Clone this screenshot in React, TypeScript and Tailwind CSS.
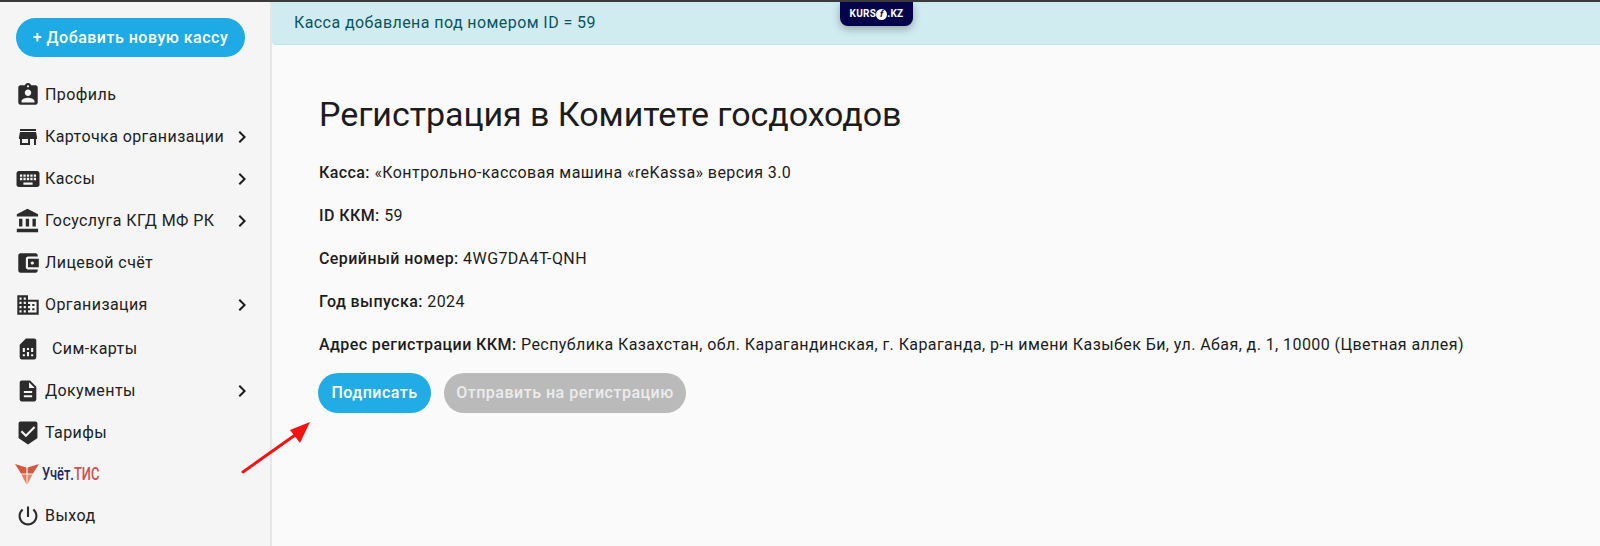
const paths = {
  profile: "M19 3h-4.18C14.4 1.84 13.3 1 12 1c-1.3 0-2.4.84-2.82 2H5c-1.1 0-2 .9-2 2v14c0 1.1.9 2 2 2h14c1.1 0 2-.9 2-2V5c0-1.1-.9-2-2-2zm-7 0c.55 0 1 .45 1 1s-.45 1-1 1-1-.45-1-1 .45-1 1-1zm0 4c1.66 0 3 1.34 3 3s-1.34 3-3 3-3-1.34-3-3 1.34-3 3-3zm6 12H6v-1.4c0-2 4-3.1 6-3.1s6 1.1 6 3.1V19z",
  store: "M20 4H4v2h16V4zm1 10v-2l-1-5H4l-1 5v2h1v6h10v-6h4v6h2v-6h1zm-9 4H6v-4h6v4z",
  keyboard: "M20 5H4c-1.1 0-1.99.9-1.99 2L2 17c0 1.1.9 2 2 2h16c1.1 0 2-.9 2-2V7c0-1.1-.9-2-2-2zm-9 3h2v2h-2V8zm0 3h2v2h-2v-2zM8 8h2v2H8V8zm0 3h2v2H8v-2zm-1 2H5v-2h2v2zm0-3H5V8h2v2zm9 7H8v-2h8v2zm0-4h-2v-2h2v2zm0-3h-2V8h2v2zm3 3h-2v-2h2v2zm0-3h-2V8h2v2z",
  bank: "M4 10v7h3v-7H4zm6 0v7h3v-7h-3zM2 22h19v-3H2v3zm14-12v7h3v-7h-3zm-4.5-9L2 6v2h19V6l-9.5-5z",
  wallet: "M21 18v1c0 1.1-.9 2-2 2H5c-1.11 0-2-.9-2-2V5c0-1.1.89-2 2-2h14c1.1 0 2 .9 2 2v1h-9c-1.11 0-2 .9-2 2v8c0 1.1.89 2 2 2h9zm-9-2h10V8H12v8zm4-2.5c-.83 0-1.5-.67-1.5-1.5s.67-1.5 1.5-1.5 1.5.67 1.5 1.5-.67 1.5-1.5 1.5z",
  domain: "M12 7V3H2v18h20V7H12zM6 19H4v-2h2v2zm0-4H4v-2h2v2zm0-4H4V9h2v2zm0-4H4V5h2v2zm4 12H8v-2h2v2zm0-4H8v-2h2v2zm0-4H8V9h2v2zm0-4H8V5h2v2zm10 12h-8v-2h2v-2h-2v-2h2v-2h-2V9h8v10zm-2-8h-2v2h2v-2zm0 4h-2v2h2v-2z",
  sim: "M19.99 4c0-1.1-.89-2-1.99-2h-8L4 8v12c0 1.1.9 2 2 2h12c1.1 0 2-.9 2-2l-.01-16zM9 19H7v-2h2v2zm8 0h-2v-2h2v2zm-8-4H7v-4h2v4zm4 4h-2v-4h2v4zm0-6h-2v-2h2v2zm4 2h-2v-4h2v4z",
  doc: "M14 2H6c-1.1 0-1.99.9-1.99 2L4 20c0 1.1.89 2 1.99 2H18c1.1 0 2-.9 2-2V8l-6-6zm2 16H8v-2h8v2zm0-4H8v-2h8v2zm-3-5V3.5L18.5 9H13z",
  tariff: "M19 1H5c-1.1 0-1.99.9-1.99 2L3 15.93c0 .69.35 1.3.88 1.66L12 23l8.11-5.41c.53-.36.88-.97.88-1.66L21 3c0-1.1-.9-2-2-2zm-9 15l-5-5 1.41-1.41L10 13.17l7.59-7.59L19 7l-9 9z",
  power: "M13 3h-2v10h2V3zm4.83 2.17l-1.42 1.42C17.99 7.86 19 9.81 19 12c0 3.87-3.13 7-7 7s-7-3.13-7-7c0-2.19 1.01-4.14 2.58-5.42L6.17 5.17C4.23 6.82 3 9.26 3 12c0 4.97 4.03 9 9 9s9-4.03 9-9c0-2.74-1.23-5.18-3.17-6.83z",
  chevron: "M10 6L8.59 7.41 13.17 12l-4.58 4.59L10 18l6-6z",
};

function Row({ icon, label, more, sim, iconClass = "" }: { icon: string; label: string; more?: boolean; sim?: boolean; iconClass?: string }) {
  return (
    <div className={sim ? "flex items-center justify-between h-[42px] pl-4 pr-4 mt-[2px]" : "flex items-center justify-between h-[42px] pl-4 pr-4"}>
      <div className="flex items-center min-w-0">
        <svg viewBox="0 0 24 24" className={"w-6 h-6 shrink-0 fill-[#2b2b2b] " + iconClass}>
          <path d={icon} />
        </svg>
        <span className={sim ? "ml-3 text-base whitespace-nowrap tracking-[0.42px] text-[#212121]" : "ml-[5px] text-base whitespace-nowrap tracking-[0.42px] text-[#212121]"}>{label}</span>
      </div>
      {more && (
        <svg viewBox="0 0 24 24" className="w-6 h-6 shrink-0 fill-[#1c1c1c]">
          <path d={paths.chevron} />
        </svg>
      )}
    </div>
  );
}

function Field({ name, value }: { name: string; value: string }) {
  return (
    <p className="text-base leading-[24px] tracking-[0.42px] text-[#1c1c1c] mb-[19px]">
      <b className="font-medium">{name}</b> {value}
    </p>
  );
}

export default function App() {
  return (
    <div className="relative w-[1600px] h-[546px] overflow-hidden flex bg-[#fafafa] border-t-2 border-[#3a3a3a] font-['Roboto',sans-serif]">
      <aside className="w-[272px] shrink-0 bg-[#f5f5f5] border-r-2 border-[#e6e6e6]">
        <div className="pl-4 pt-4 pb-[17px]">
          <div className="w-[229px] h-[39px] rounded-[20px] bg-[#1eaae4] text-white text-base font-medium tracking-[0.5px] flex items-center justify-center">
            + Добавить новую кассу
          </div>
        </div>
        <nav>
          <Row icon={paths.profile} label="Профиль" iconClass="scale-[1.08]" />
          <Row icon={paths.store} label="Карточка организации" more />
          <Row icon={paths.keyboard} label="Кассы" more iconClass="scale-[1.15]" />
          <Row icon={paths.bank} label="Госуслуга КГД МФ РК" more iconClass="scale-[1.12]" />
          <Row icon={paths.wallet} label="Лицевой счёт" iconClass="scale-[1.08]" />
          <Row icon={paths.domain} label="Организация" more iconClass="scale-[1.07]" />
          <Row icon={paths.sim} label="Сим-карты" sim iconClass="scale-[1.04]" />
          <Row icon={paths.doc} label="Документы" more iconClass="scale-[1.04]" />
          <Row icon={paths.tariff} label="Тарифы" iconClass="scale-[1.05]" />
          <div className="flex items-center h-[42px] pl-[15px]">
            <svg viewBox="0 0 24 21" className="w-6 h-[21px] shrink-0 -translate-y-[1px]">
              <path d="M0 0 L11.4 3.5 L11.4 9.5 L6 9.5 Z" fill="#d9573b" />
              <path d="M24 0 L12.6 3.5 L12.6 9.5 L18 9.5 Z" fill="#cf5a44" />
              <path d="M6.5 10.5 L11.5 10.5 L11.5 20.5 Z" fill="#e8795a" />
              <path d="M17.5 10.5 L12.5 10.5 L12.5 20.5 Z" fill="#e58a70" />
            </svg>
            <span className="ml-[3px] -translate-y-[1px] text-[19px] font-medium scale-x-[0.68] origin-left text-[#1e2a5e] whitespace-nowrap">
              Учёт.<span className="text-[#c9504f]">ТИС</span>
            </span>
          </div>
          <div className="-mt-[1px]"><Row icon={paths.power} label="Выход" iconClass="scale-[1.05]" /></div>
        </nav>
      </aside>

      <main className="flex-1 min-w-0">
        <div className="h-[43px] bg-[#d1ecf1] border-b border-[#bee5eb] rounded-bl-[4px] pl-[22px] flex items-center text-base text-[#0c5460] tracking-[0.42px]">
          Касса добавлена под номером ID = 59
        </div>
        <div className="pl-[47px] pt-[49px]">
          <h1 className="text-[34px] leading-[40px] font-normal tracking-[-0.06px] text-[#1c1c1c] mb-[27px]">Регистрация в Комитете госдоходов</h1>
          <Field name="Касса:" value="«Контрольно-кассовая машина «reKassa» версия 3.0" />
          <Field name="ID ККМ:" value="59" />
          <Field name="Серийный номер:" value="4WG7DA4T-QNH" />
          <Field name="Год выпуска:" value="2024" />
          <Field name="Адрес регистрации ККМ:" value="Республика Казахстан, обл. Карагандинская, г. Караганда, р-н имени Казыбек Би, ул. Абая, д. 1, 10000 (Цветная аллея)" />
          <div className="flex gap-[13px] -ml-[1px] -mt-[3px]">
            <div className="h-[40px] w-[113px] rounded-[20px] bg-[#22ace5] text-white text-base font-medium tracking-[0.5px] flex items-center justify-center">Подписать</div>
            <div className="h-[40px] w-[242px] rounded-[20px] bg-[#bababa] text-[#ececec] text-base font-medium tracking-[0.5px] flex items-center justify-center">Отправить на регистрацию</div>
          </div>
        </div>
      </main>

      <div className="absolute left-[840px] top-0 w-[73px] h-[24px] rounded-b-[8px] bg-[#05044b] shadow-[0_3px_8px_rgba(0,0,0,0.3)] flex items-center justify-center text-white text-[10px] leading-none font-bold tracking-[0.3px]">
        <span>KURS</span>
        <span className="w-[11px] h-[11px] rounded-full bg-white text-[#05044b] text-[9px] italic flex items-center justify-center">f</span>
        <span>.KZ</span>
      </div>

      <svg className="absolute left-[240px] top-[417px] w-[80px] h-[60px]" viewBox="0 0 80 60">
        <path d="M3 53 L58 14" stroke="#f01414" strokeWidth="3" strokeLinecap="round" />
        <path d="M70 3 L50 11 L60 24 Z" fill="#f01414" />
      </svg>
    </div>
  );
}
